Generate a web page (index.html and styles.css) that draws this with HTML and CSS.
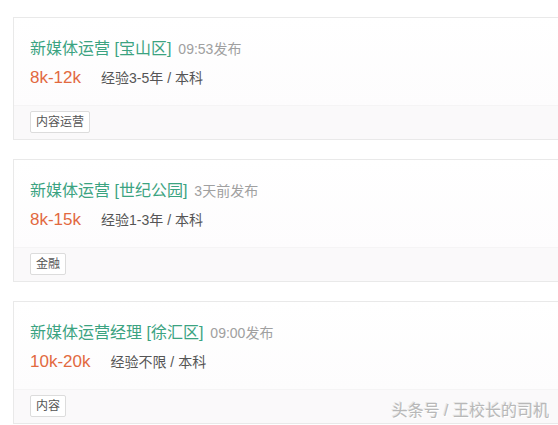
FILE: index.html
```html
<!doctype html>
<html>
<head>
<meta charset="utf-8">
<title>职位列表</title>
<link rel="stylesheet" href="styles.css">
</head>
<body>
<div class="list">
    <div class="job">
        <div class="job_main">
            <p class="job_title"><a href="javascript:;">新媒体运营 [宝山区]</a><span class="time">09:53发布</span></p>
            <p class="job_info"><span class="money">8k-12k</span><span class="req">经验3-5年 / 本科</span></p>
        </div>
        <div class="job_tags"><span class="tag">内容运营</span></div>
    </div>

    <div class="job">
        <div class="job_main">
            <p class="job_title"><a href="javascript:;">新媒体运营 [世纪公园]</a><span class="time">3天前发布</span></p>
            <p class="job_info"><span class="money">8k-15k</span><span class="req">经验1-3年 / 本科</span></p>
        </div>
        <div class="job_tags"><span class="tag">金融</span></div>
    </div>

    <div class="job">
        <div class="job_main">
            <p class="job_title"><a href="javascript:;">新媒体运营经理 [徐汇区]</a><span class="time">09:00发布</span></p>
            <p class="job_info"><span class="money">10k-20k</span><span class="req">经验不限 / 本科</span></p>
        </div>
        <div class="job_tags"><span class="tag">内容</span></div>
    </div>
</div>
<div class="mark">头条号 / 王校长的司机</div>
</body>
</html>
```

FILE: styles.css
```css
body,div,span,p,a{margin:0; padding:0;}
body{
	font-family:'Liberation Sans', 'Noto Sans CJK SC', sans-serif;
	background:#fff;
	overflow:hidden;
	height:425px;
	position:relative;
}
.list{
	display:flex;
	flex-direction:column;
	gap:19px;
	padding:17px 0 0 13px;
}
/*卡片右边一直延伸到窗口外，所以不画右边框*/
.job{
	border:1px solid #e9e9e9;
	border-right:none;
	background:#fff;
}
.job_main{
	padding:20px 16px 16px;
	background:linear-gradient(#fff, #fdfcfd);
}
.job_title{
	height:22px;
	line-height:22px;
	display:flex;
	align-items:baseline;
}
.job_title a{
	color:#3ba381;
	font-size:16px;
	text-decoration:none;
}
.job_title .time{
	margin-left:7px;
	color:#a0a0a0;
	font-size:14px;
}
.job_info{
	margin-top:7px;
	height:22px;
	line-height:22px;
	display:flex;
	align-items:baseline;
}
.money{
	color:#e2693f;
	font-size:17px;
	margin-right:20px;
}
.req{
	color:#555;
	font-size:14px;
}
.job_tags{
	padding:5px 16px 6px;
	background:#faf9fa;
	border-top:1px solid #f5f4f5;
}
.tag{
	display:inline-block;
	height:20px;
	line-height:20px;
	padding:0 5px;
	font-size:12px;
	color:#555;
	border:1px solid #dcdcdc;
	border-radius:2px;
	background:#fff;
}
.mark{
	position:absolute;
	right:9px;
	bottom:4px;
	font-size:16px;
	color:#b8b8b8;
	text-shadow:1px 1px 0 #fff, -1px -1px 0 #e6e6e6;
}
```
